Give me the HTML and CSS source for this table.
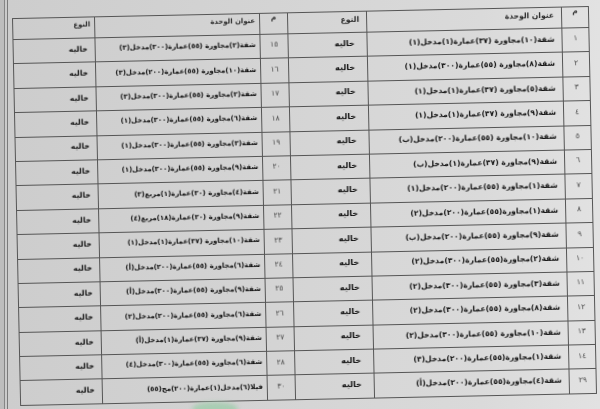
FILE: index.html
```html
<!DOCTYPE html>
<html lang="ar">
<head>
<meta charset="utf-8">
<link rel="stylesheet" href="styles.css">
</head>
<body>
<div class="edge">
  <div class="sheet">
    <table class="units" dir="rtl">
      <colgroup>
        <col class="c-num"><col class="c-title-r"><col class="c-type-r">
        <col class="c-num2"><col class="c-title-l"><col class="c-type-l">
      </colgroup>
      <thead>
        <tr>
          <th class="num">م</th><th>عنوان الوحدة</th><th>النوع</th>
          <th class="num">م</th><th class="l">عنوان الوحدة</th><th class="l">النوع</th>
        </tr>
      </thead>
      <tbody>
        <tr><td class="num">١</td><td>شقة(١٠)مجاورة (٣٧)عمارة(١)مدخل(١)</td><td class="type">خاليه</td><td class="num">١٥</td><td class="l">شقة(٢)مجاورة (٥٥)عمارة(٣٠٠)مدخل(٣)</td><td class="type l">خاليه</td></tr>
        <tr><td class="num">٢</td><td>شقة(٨)مجاورة (٥٥)عمارة(٣٠٠)مدخل(١)</td><td class="type">خاليه</td><td class="num">١٦</td><td class="l">شقة(١٠)مجاورة (٥٥)عمارة(٢٠٠)مدخل(٣)</td><td class="type l">خاليه</td></tr>
        <tr><td class="num">٣</td><td>شقة(٥)مجاورة (٣٧)عمارة(١)مدخل(١)</td><td class="type">خاليه</td><td class="num">١٧</td><td class="l">شقة(٢)مجاورة (٥٥)عمارة(٣٠٠)مدخل(٣)</td><td class="type l">خاليه</td></tr>
        <tr><td class="num">٤</td><td>شقة(٩)مجاورة (٣٧)عمارة(١)مدخل(١)</td><td class="type">خاليه</td><td class="num">١٨</td><td class="l">شقة(٦)مجاورة (٥٥)عمارة(٣٠٠)مدخل(١)</td><td class="type l">خاليه</td></tr>
        <tr><td class="num">٥</td><td>شقة(١٠)مجاورة (٥٥)عمارة(٢٠٠)مدخل(ب)</td><td class="type">خاليه</td><td class="num">١٩</td><td class="l">شقة(٣)مجاورة (٥٥)عمارة(٣٠٠)مدخل(١)</td><td class="type l">خاليه</td></tr>
        <tr><td class="num">٦</td><td>شقة(٩)مجاورة (٣٧)عمارة(١)مدخل(ب)</td><td class="type">خاليه</td><td class="num">٢٠</td><td class="l">شقة(٩)مجاورة (٥٥)عمارة(٣٠٠)مدخل(١)</td><td class="type l">خاليه</td></tr>
        <tr><td class="num">٧</td><td>شقة(١)مجاورة (٥٥)عمارة(٢٠٠)مدخل(١)</td><td class="type">خاليه</td><td class="num">٢١</td><td class="l">شقة(٤)مجاورة (٣٠)عمارة(١)مربع(٣)</td><td class="type l">خاليه</td></tr>
        <tr><td class="num">٨</td><td>شقة(١)مجاورة(٥٥)عمارة(٢٠٠)مدخل(٢)</td><td class="type">خاليه</td><td class="num">٢٢</td><td class="l">شقة(٩)مجاورة (٣٠)عمارة(١٨)مربع(٤)</td><td class="type l">خاليه</td></tr>
        <tr><td class="num">٩</td><td>شقة(٩)مجاورة (٥٥)عمارة(٢٠٠)مدخل(ب)</td><td class="type">خاليه</td><td class="num">٢٣</td><td class="l">شقة(١٠)مجاورة (٣٧)عمارة(١)مدخل(١)</td><td class="type l">خاليه</td></tr>
        <tr><td class="num">١٠</td><td>شقة(٢)مجاورة(٥٥)عمارة(٣٠٠)مدخل(٢)</td><td class="type">خاليه</td><td class="num">٢٤</td><td class="l">شقة(٦)مجاورة (٥٥)عمارة(٢٠٠)مدخل(أ)</td><td class="type l">خاليه</td></tr>
        <tr><td class="num">١١</td><td>شقة(٣)مجاورة (٥٥)عمارة(٣٠٠)مدخل(٢)</td><td class="type">خاليه</td><td class="num">٢٥</td><td class="l">شقة(٩)مجاورة (٥٥)عمارة(٣٠٠)مدخل(أ)</td><td class="type l">خاليه</td></tr>
        <tr><td class="num">١٢</td><td>شقة(٨)مجاورة (٥٥)عمارة(٣٠٠)مدخل(٢)</td><td class="type">خاليه</td><td class="num">٢٦</td><td class="l">شقة(٦)مجاورة (٥٥)عمارة(٢٠٠)مدخل(٢)</td><td class="type l">خاليه</td></tr>
        <tr><td class="num">١٣</td><td>شقة(١٠)مجاورة (٥٥)عمارة(٣٠٠)مدخل(٢)</td><td class="type">خاليه</td><td class="num">٢٧</td><td class="l">شقة(٩)مجاورة (٣٧)عمارة(١)مدخل(أ)</td><td class="type l">خاليه</td></tr>
        <tr><td class="num">١٤</td><td>شقة(١)مجاورة(٥٥)عمارة(٢٠٠)مدخل(٣)</td><td class="type">خاليه</td><td class="num">٢٨</td><td class="l">شقة(٦)مجاورة (٥٥)عمارة(٣٠٠)مدخل(٤)</td><td class="type l">خاليه</td></tr>
        <tr><td class="num">٢٩</td><td>شقة(٤)مجاورة(٥٥)عمارة(٢٠٠)مدخل(أ)</td><td class="type">خاليه</td><td class="num">٣٠</td><td class="l">فيلا(٦)مدخل(١)عمارة(٢٠٠)مج(٥٥)</td><td class="type l">خاليه</td></tr>
      </tbody>
    </table>
    <div class="stain"></div>
  </div>
</div>
</body>
</html>
```

FILE: styles.css
```css
html, body {
  margin: 0;
  padding: 0;
  width: 600px;
  height: 409px;
  overflow: hidden;
  background: #bdbdbd;
}

.edge {
  height: 409px;
  margin-left: 4px;
  padding-left: 2px;
  border-left: 1px solid #858585;
  background: #cbcbcb;
}

.sheet {
  position: relative;
  height: 409px;
  overflow: hidden;
  border-left: 1px solid #7a7a7a;
  background: linear-gradient(90deg, #cdcdcd 0%, #d4d4d4 45%, #dadada 80%, #e2e2e2 100%);
  padding-left: 8px;
  padding-top: 12px;
  box-sizing: border-box;
}

.units {
  width: 576px;
  border-collapse: collapse;
  table-layout: fixed;
  font-family: "DejaVu Sans", sans-serif;
  font-weight: bold;
  color: #111;
  line-height: 1;
  transform: rotate(-1.2deg);
  transform-origin: 50% 50%;
  filter: blur(0.3px);
}

.c-num { width: 27px; }
.c-title-r { width: 195px; }
.c-type-r { width: 79px; }
.c-num2 { width: 28px; }
.c-title-l { width: 165px; }
.c-type-l { width: 82px; }

.units thead tr { height: 21px; }
.units tbody tr { height: 24.4px; }

.units th,
.units td {
  border: 1px solid #555;
  padding: 0 7px 2px 2px;
  text-align: right;
  white-space: nowrap;
  overflow: hidden;
  font-size: 7.6px;
  vertical-align: middle;
}

.units .l {
  font-size: 6.9px;
  padding-right: 4px;
}

.units th {
  color: #2a2a2a;
  vertical-align: top;
  padding-top: 4px;
}

.units .num {
  text-align: center;
  padding: 0 2px 3px;
  font-weight: normal;
  color: #444;
  font-size: 7.5px;
}

.units th.num {
  font-weight: bold;
  color: #333;
}

.units .type {
  padding-right: 12px;
  font-size: 8px;
}

.units .type.l {
  padding-right: 7px;
  font-size: 7.6px;
}

.stain {
  position: absolute;
  left: 184px;
  top: 402px;
  width: 46px;
  height: 14px;
  border-radius: 50%;
  background: #a9cdb3;
  filter: blur(2px);
}
```
